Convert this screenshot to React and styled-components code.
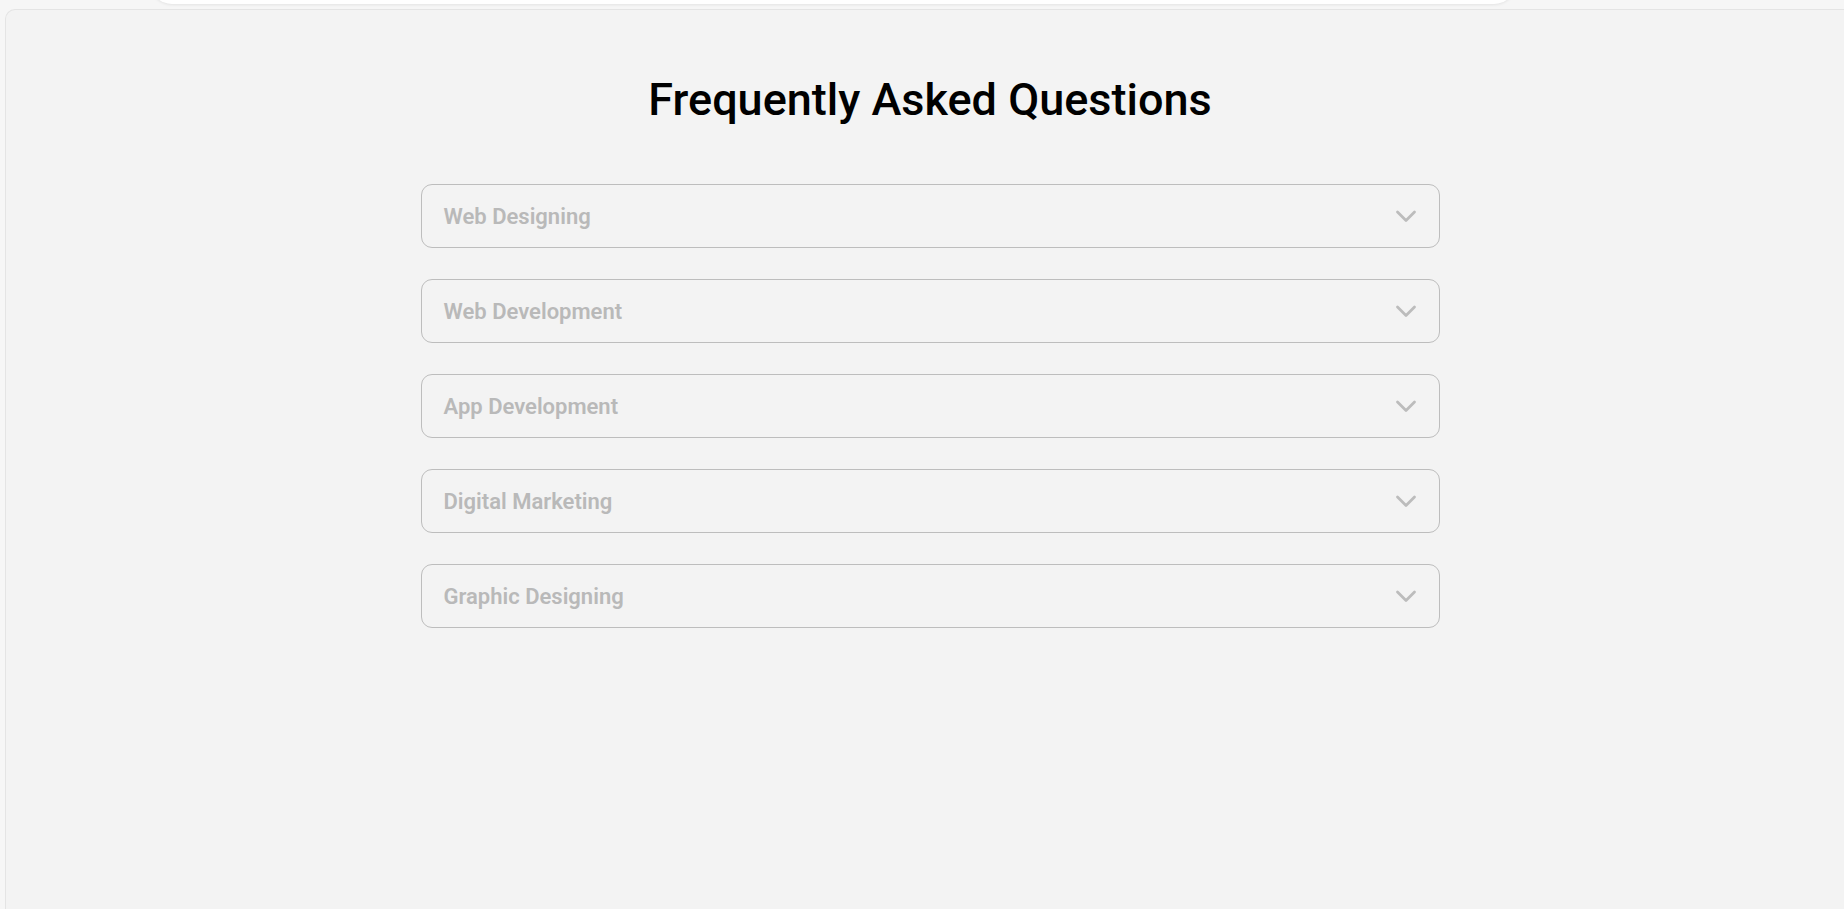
import React from "react";
import styled, { createGlobalStyle } from "styled-components";

const Global = createGlobalStyle`
  html, body { margin: 0; padding: 0; }
  body {
    background: #f6f6f6;
    font-family: Roboto, "Liberation Sans", sans-serif;
    overflow: hidden;
  }
`;

const Page = styled.div`
  display: flex;
  flex-direction: column;
  min-height: 909px;
`;

const TopBar = styled.div`
  margin: -60px 0 0 150px;
  width: 1366px;
  height: 64px;
  background: #ffffff;
  border-radius: 0 0 22px 22px;
  box-shadow: 0 1px 3px rgba(0, 0, 0, 0.08);
`;

const Panel = styled.main`
  flex: 1;
  margin: 5px 0 0 5px;
  padding: 64px 0 0 10px;
  background: #f3f3f3;
  border-top: 1px solid #e4e4e4;
  border-left: 1px solid #e4e4e4;
  border-top-left-radius: 10px;
  display: flex;
  flex-direction: column;
  align-items: center;
`;

const Title = styled.h1`
  margin: 0 0 57px;
  font-family: Roboto, "Liberation Sans", sans-serif;
  font-size: 45px;
  font-weight: 500;
  color: #000;
  line-height: 1.17;
`;

const List = styled.div`
  width: 1019px;
  display: flex;
  flex-direction: column;
  gap: 31px;
`;

const Item = styled.button`
  box-sizing: border-box;
  height: 64px;
  width: 100%;
  display: flex;
  align-items: center;
  justify-content: space-between;
  padding: 2px 22px 0 22px;
  background: transparent;
  border: 1px solid #bdbdbd;
  border-radius: 11px;
  cursor: pointer;
`;

const Label = styled.span`
  font-family: Roboto, "Liberation Sans", sans-serif;
  font-size: 22px;
  font-weight: 600;
  color: #b9b9b9;
`;

const Chevron = () => (
  <svg width="22" height="13" viewBox="0 0 22 13" fill="none">
    <polyline
      points="2.5,2 11,10.5 19.5,2"
      stroke="#bcbcbc"
      strokeWidth="2.8"
      strokeLinecap="round"
      strokeLinejoin="round"
    />
  </svg>
);

const items = [
  "Web Designing",
  "Web Development",
  "App Development",
  "Digital Marketing",
  "Graphic Designing",
];

export default function App() {
  return (
    <>
      <Global />
      <Page>
        <TopBar />
        <Panel>
          <Title>Frequently Asked Questions</Title>
          <List>
            {items.map((t) => (
              <Item key={t}>
                <Label>{t}</Label>
                <Chevron />
              </Item>
            ))}
          </List>
        </Panel>
      </Page>
    </>
  );
}
